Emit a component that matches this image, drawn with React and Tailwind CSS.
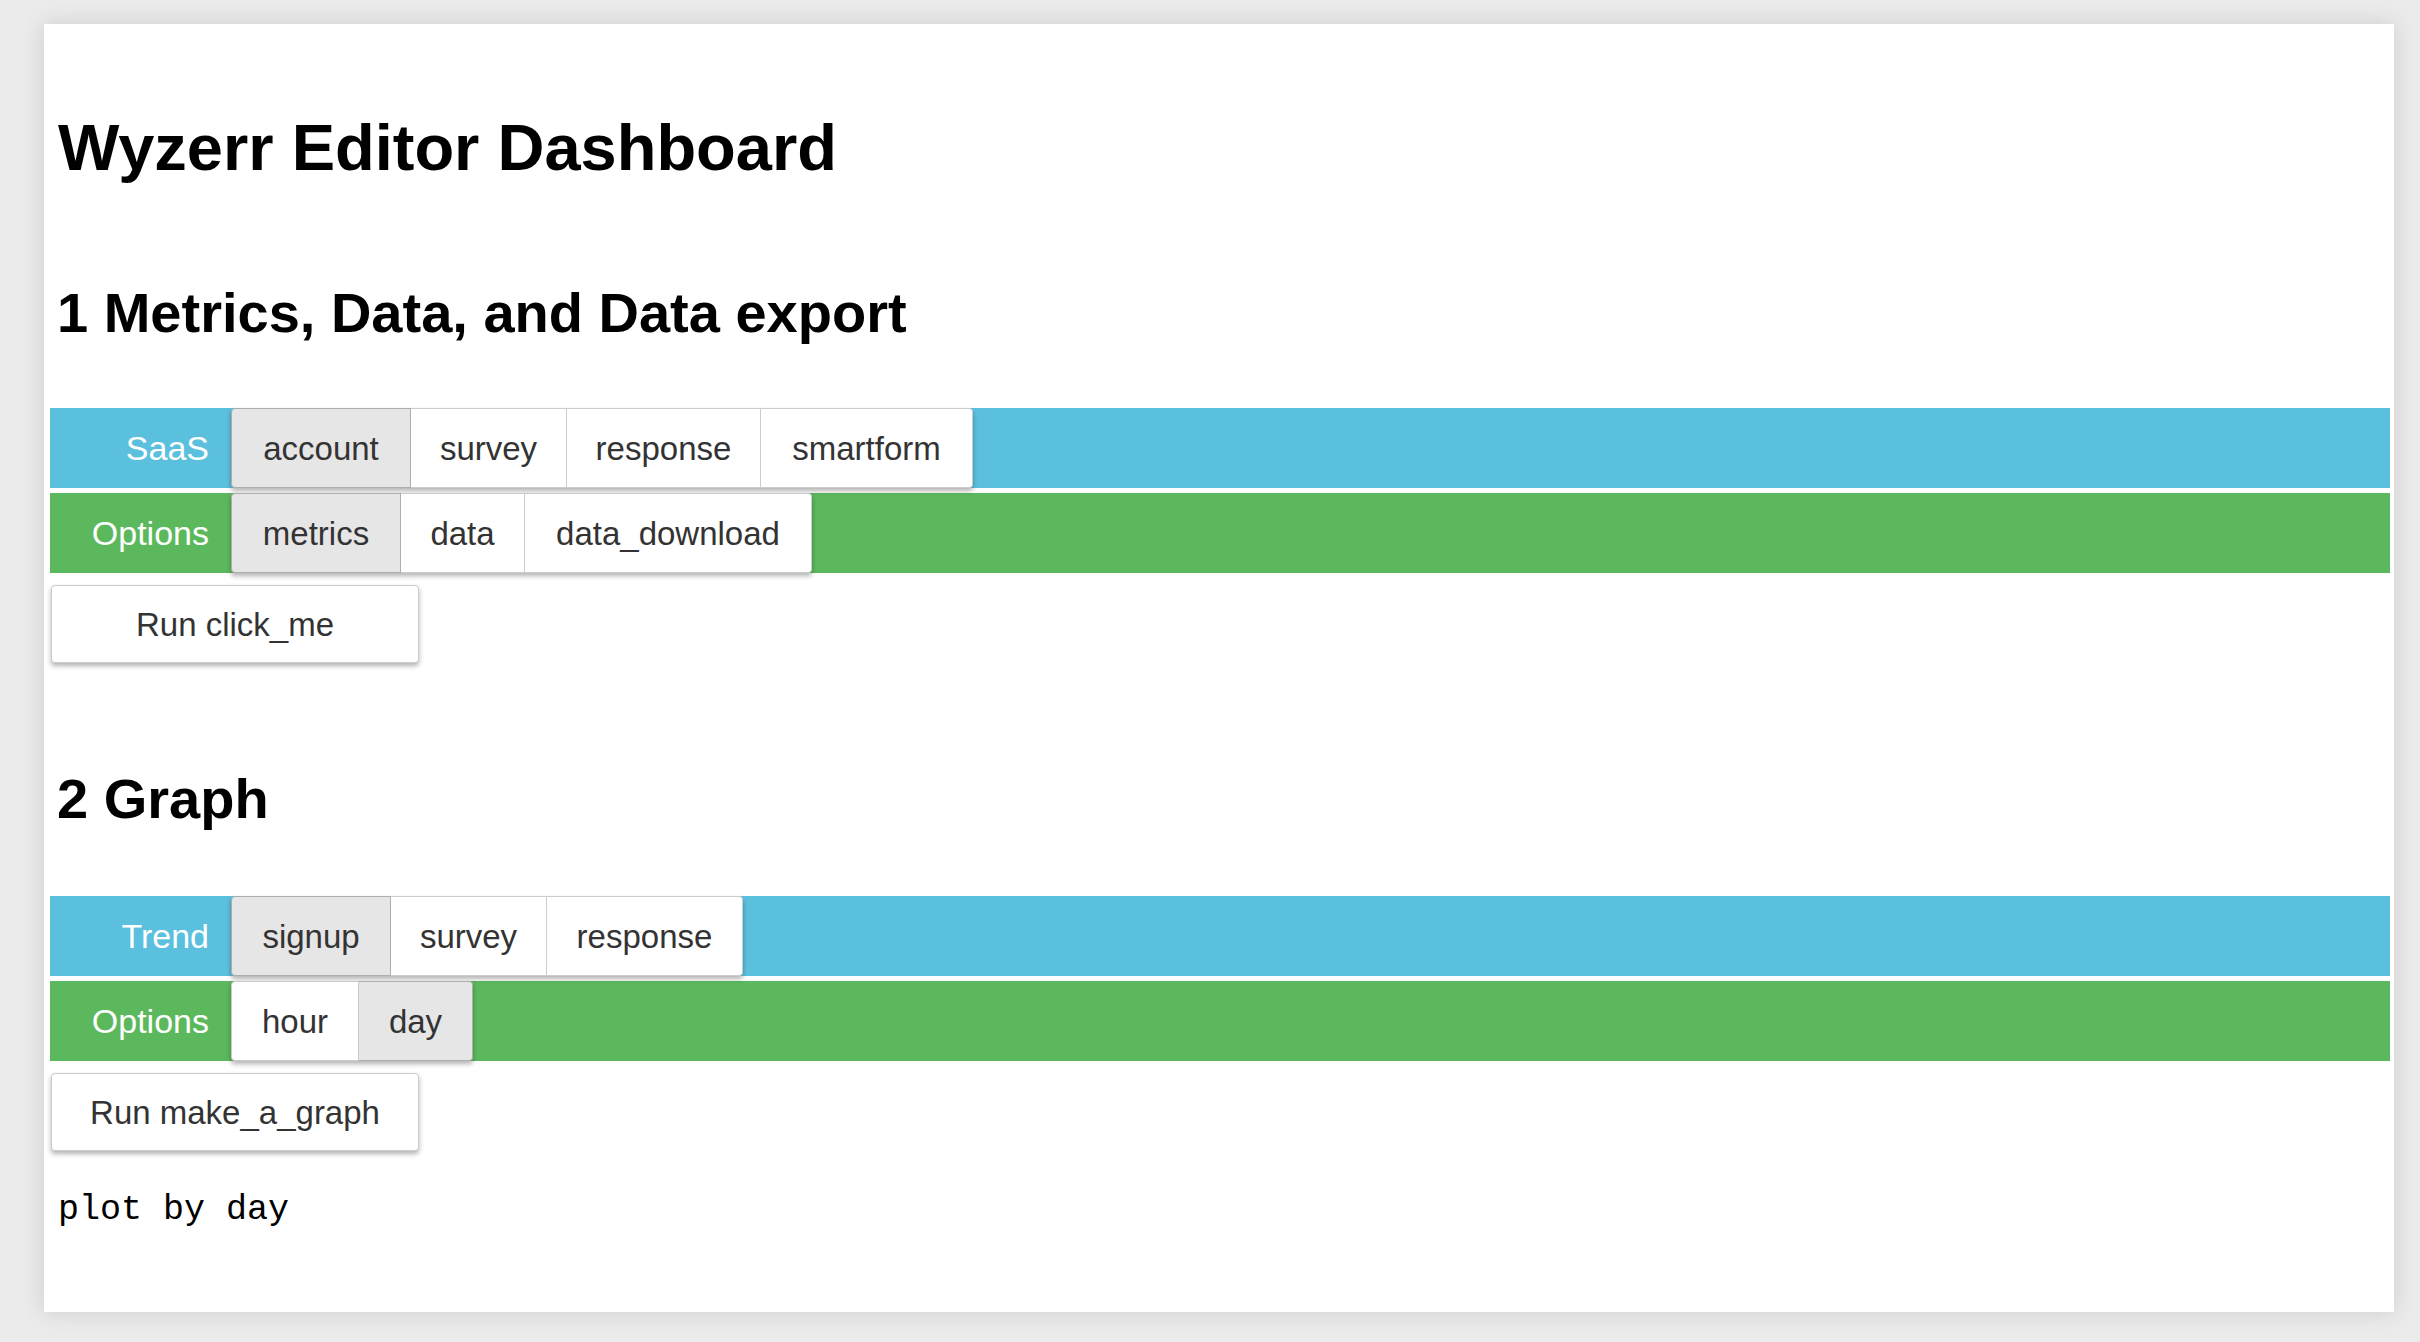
import React from 'react';

const sections = [
  {
    title: '1 Metrics, Data, and Data export',
    rows: [
      {
        label: 'SaaS',
        color: 'bg-[#5bc0de]',
        buttons: [
          { text: 'account', w: 'w-[180px]', active: true },
          { text: 'survey', w: 'w-[156px]' },
          { text: 'response', w: 'w-[194px]' },
          { text: 'smartform', w: 'w-[212px]' },
        ],
      },
      {
        label: 'Options',
        color: 'bg-[#5cb85c]',
        buttons: [
          { text: 'metrics', w: 'w-[170px]', active: true },
          { text: 'data', w: 'w-[124px]' },
          { text: 'data_download', w: 'w-[287px]' },
        ],
      },
    ],
    run: 'Run click_me',
    headMargin: 'mt-[105px]',
    barMargin: 'mt-[67px]',
  },
  {
    title: '2 Graph',
    rows: [
      {
        label: 'Trend',
        color: 'bg-[#5bc0de]',
        buttons: [
          { text: 'signup', w: 'w-[160px]', active: true },
          { text: 'survey', w: 'w-[156px]' },
          { text: 'response', w: 'w-[196px]' },
        ],
      },
      {
        label: 'Options',
        color: 'bg-[#5cb85c]',
        buttons: [
          { text: 'hour', w: 'w-[128px]' },
          { text: 'day', w: 'w-[114px]', active: true },
        ],
      },
    ],
    run: 'Run make_a_graph',
    headMargin: 'mt-[108px]',
    barMargin: 'mt-[69px]',
  },
];

function ToggleRow({ row, first }) {
  return (
    <div className={`flex h-[80px] ${row.color} ${first ? '' : 'mt-[5px]'}`}>
      <div className="w-[181px] shrink-0 pr-[22px] flex items-center justify-end text-white text-[34px] leading-none">
        {row.label}
      </div>
      <div className="flex h-full rounded-[4px] shadow-[0_3px_5px_rgba(0,0,0,0.3)]">
        {row.buttons.map((b, i) => (
          <button
            key={b.text}
            className={`${b.w} h-full flex items-center justify-center text-[33px] leading-none text-[#333] border ${
              b.active ? 'bg-[#e6e6e6] border-[#adadad]' : 'bg-white border-[#ccc]'
            } ${i > 0 ? 'border-l-0' : 'rounded-l-[4px]'} ${i === row.buttons.length - 1 ? 'rounded-r-[4px]' : ''}`}
          >
            {b.text}
          </button>
        ))}
      </div>
    </div>
  );
}

export default function App() {
  return (
    <div className="min-h-screen bg-[#ebebeb] pt-[24px] pl-[44px] pr-[26px] pb-[30px] font-['Liberation_Sans',Arial,sans-serif]">
      <div className="bg-white pl-[6px] pr-[4px] pt-[91px] pb-[84px] shadow-[0_0_22px_rgba(0,0,0,0.13)]">
        <h1 className="pl-[8px] text-[65px] leading-none font-bold text-black">Wyzerr Editor Dashboard</h1>

        {sections.map((s) => (
          <div key={s.title}>
            <h2 className={`${s.headMargin} pl-[7px] text-[56px] leading-none font-bold text-black`}>{s.title}</h2>
            <div className={s.barMargin}>
              {s.rows.map((row, i) => (
                <ToggleRow key={row.label + i} row={row} first={i === 0} />
              ))}
            </div>
            <button className="mt-[12px] ml-px w-[368px] h-[78px] bg-white border border-[#ccc] rounded-[4px] text-[33px] leading-none text-[#333] shadow-[0_3px_5px_rgba(0,0,0,0.3)]">
              {s.run}
            </button>
          </div>
        ))}

        <div className="mt-[42px] pl-[8px] font-['Liberation_Mono',monospace] text-[35px] leading-none text-black">
          plot by day
        </div>
      </div>
    </div>
  );
}
